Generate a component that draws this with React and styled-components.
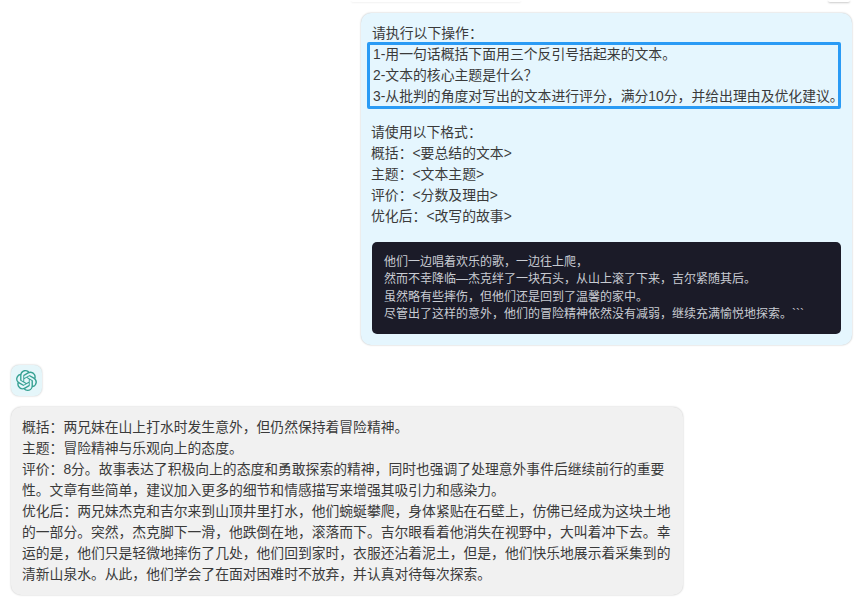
import React from "react";
import styled, { createGlobalStyle } from "styled-components";
import { SiOpenai } from "react-icons/si";

const GlobalStyle = createGlobalStyle`
  html, body {
    margin: 0;
    padding: 0;
    background: #ffffff;
  }
  body {
    width: 864px;
    height: 599px;
    overflow: hidden;
    font-family: "Liberation Sans", "Noto Sans CJK SC", sans-serif;
    color: #3a3a3a;
  }
`;

const Page = styled.div`
  display: flex;
  flex-direction: column;
  padding: 0 12px 0 11px;
`;

const TopStrip = styled.div`
  height: 13px;
  display: flex;
  justify-content: space-between;
  padding: 0 2px 0 340px;
`;

const PrevBubbleEdge = styled.div`
  width: 170px;
  height: 2px;
  border-radius: 0 0 8px 8px;
  box-shadow: 0 1px 2px rgba(0, 0, 0, 0.06);
`;

const PrevAvatarEdge = styled.div`
  width: 22px;
  height: 2px;
  border-radius: 0 0 10px 10px;
  box-shadow: 0 1px 2px rgba(0, 0, 0, 0.22);
`;

const UserRow = styled.div`
  display: flex;
  justify-content: flex-end;
`;

const UserBubble = styled.div`
  width: 491px;
  height: 332px;
  box-sizing: border-box;
  padding: 9px 11px 0 6px;
  background: #e5f6fe;
  border-radius: 10px;
  box-shadow: 0 0 2px rgba(0, 0, 0, 0.28);
`;

const Line = styled.div`
  height: ${(p) => p.$h || 21}px;
  line-height: ${(p) => p.$h || 21}px;
  font-size: ${(p) => p.$size || 13.85}px;
  white-space: nowrap;
  padding-left: ${(p) => p.$indent || 0}px;
`;

const HeadLine = styled(Line)`
  height: 20px;
  line-height: 22px;
`;

const Highlight = styled.div`
  width: 474px;
  height: 67px;
  box-sizing: border-box;
  border: 3px solid #2a9bf5;
  border-radius: 2px;
  padding: 0 0 0 3px;
`;

const HighlightText = styled.div`
  margin-top: -1px;
`;

const FormatBlock = styled.div`
  margin-top: 13px;
`;

const CodeBlock = styled.div`
  margin: 15px 0 0 5px;
  width: 469px;
  height: 92px;
  box-sizing: border-box;
  padding: 12px 12px 0;
  background: #1b1b28;
  border-radius: 5px;
  color: #c9ccd3;
`;

const Avatar = styled.div`
  margin-top: 20px;
  width: 31px;
  height: 31px;
  display: flex;
  align-items: center;
  justify-content: center;
  background: #e5f6fa;
  border-radius: 8px;
  box-shadow: 0 0 2px rgba(0, 0, 0, 0.25);
  color: #36a193;
`;

const AnswerBubble = styled.div`
  margin-top: 11px;
  width: 672px;
  height: 188px;
  box-sizing: border-box;
  padding: 10px 0 0 11px;
  background: #f1f1f1;
  border-radius: 10px;
  box-shadow: 0 0 2px rgba(0, 0, 0, 0.25);
`;

const taskLines = [
  "1-用一句话概括下面用三个反引号括起来的文本。",
  "2-文本的核心主题是什么\uFF1F",
  "3-从批判的角度对写出的文本进行评分\uFF0C满分10分\uFF0C并给出理由及优化建议。",
];

const formatLines = [
  "请使用以下格式\uFF1A",
  "概括\uFF1A<要总结的文本>",
  "主题\uFF1A<文本主题>",
  "评价\uFF1A<分数及理由>",
  "优化后\uFF1A<改写的故事>",
];

const storyLines = [
  "他们一边唱着欢乐的歌\uFF0C一边往上爬\uFF0C",
  "然而不幸降临—杰克绊了一块石头\uFF0C从山上滚了下来\uFF0C吉尔紧随其后。",
  "虽然略有些摔伤\uFF0C但他们还是回到了温馨的家中。",
  "尽管出了这样的意外\uFF0C他们的冒险精神依然没有减弱\uFF0C继续充满愉悦地探索。```",
];

const answerLines = [
  "概括\uFF1A两兄妹在山上打水时发生意外\uFF0C但仍然保持着冒险精神。",
  "主题\uFF1A冒险精神与乐观向上的态度。",
  "评价\uFF1A8分。故事表达了积极向上的态度和勇敢探索的精神\uFF0C同时也强调了处理意外事件后继续前行的重要",
  "性。文章有些简单\uFF0C建议加入更多的细节和情感描写来增强其吸引力和感染力。",
  "优化后\uFF1A两兄妹杰克和吉尔来到山顶井里打水\uFF0C他们蜿蜒攀爬\uFF0C身体紧贴在石壁上\uFF0C仿佛已经成为这块土地",
  "的一部分。突然\uFF0C杰克脚下一滑\uFF0C他跌倒在地\uFF0C滚落而下。吉尔眼看着他消失在视野中\uFF0C大叫着冲下去。幸",
  "运的是\uFF0C他们只是轻微地摔伤了几处\uFF0C他们回到家时\uFF0C衣服还沾着泥土\uFF0C但是\uFF0C他们快乐地展示着采集到的",
  "清新山泉水。从此\uFF0C他们学会了在面对困难时不放弃\uFF0C并认真对待每次探索。",
];

const App = () => {
  return (
    <Page>
      <GlobalStyle />
      <TopStrip>
        <PrevBubbleEdge />
        <PrevAvatarEdge />
      </TopStrip>

      <UserRow>
        <UserBubble>
          <HeadLine $indent={5}>请执行以下操作{"\uFF1A"}</HeadLine>
          <Highlight>
            <HighlightText>
              {taskLines.map((text) => (
                <Line key={text}>{text}</Line>
              ))}
            </HighlightText>
          </Highlight>
          <FormatBlock>
            {formatLines.map((text) => (
              <Line key={text} $indent={4}>
                {text}
              </Line>
            ))}
          </FormatBlock>
          <CodeBlock>
            {storyLines.map((text) => (
              <Line key={text} $size={12} $h={17.3}>
                {text}
              </Line>
            ))}
          </CodeBlock>
        </UserBubble>
      </UserRow>

      <Avatar>
        <SiOpenai size={21} />
      </Avatar>

      <AnswerBubble>
        {answerLines.map((text) => (
          <Line key={text} $size={13.8}>
            {text}
          </Line>
        ))}
      </AnswerBubble>
    </Page>
  );
};

export default App;
